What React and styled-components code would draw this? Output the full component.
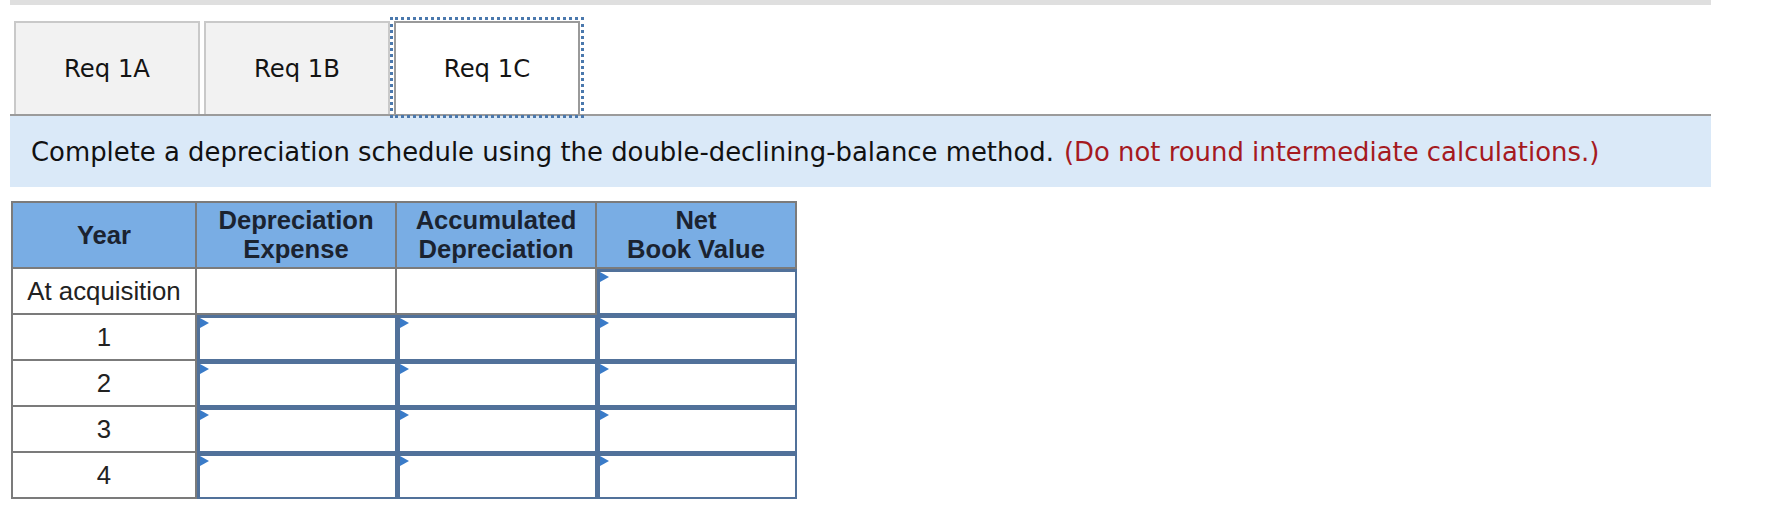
import React from "react";
import styled, { createGlobalStyle } from "styled-components";

const Global = createGlobalStyle`
  html, body { margin: 0; padding: 0; background: #ffffff; }
  body { font-family: "DejaVu Sans", Verdana, sans-serif; }
`;

const Page = styled.div`
  padding-left: 10px;
  width: 1701px;
`;

const TopBar = styled.div`
  height: 5px;
  background: #dfdfdf;
`;

const TabBar = styled.div`
  display: flex;
  gap: 4px;
  padding-left: 4px;
  margin-top: 16px;
  border-bottom: 2px solid #9b9b9b;
`;

const Tab = styled.div`
  box-sizing: border-box;
  width: 186px;
  height: 93px;
  display: flex;
  align-items: center;
  justify-content: center;
  border: 2px solid ${(p) => (p.$active ? "#9a9a9a" : "#c9c9c9")};
  border-bottom: none;
  background: ${(p) => (p.$active ? "#ffffff" : "#f2f2f2")};
  font-family: "DejaVu Sans", Verdana, sans-serif;
  font-size: 24.3px;
  color: #141414;
  outline: ${(p) => (p.$active ? "3px dotted #4a78ad" : "none")};
  outline-offset: 1px;
`;

const Instruction = styled.div`
  box-sizing: border-box;
  height: 71px;
  display: flex;
  align-items: center;
  padding-left: 21px;
  background: #dae9f8;
  font-family: "DejaVu Sans", Verdana, sans-serif;
  font-size: 25.9px;
  color: #111111;
  white-space: nowrap;
`;

const Note = styled.span`
  color: #a51a1f;
  margin-left: 10px;
`;

const Schedule = styled.div`
  display: grid;
  grid-template-columns: 184px 200px 200px 200px;
  grid-template-rows: 66px repeat(5, 46px);
  width: max-content;
  margin: 14px 0 0 1px;
  border-top: 2px solid #7b7b7b;
  border-left: 2px solid #7b7b7b;
  font-family: "Liberation Sans", Arial, sans-serif;
`;

const HeadCell = styled.div`
  box-sizing: border-box;
  display: flex;
  align-items: center;
  justify-content: center;
  text-align: center;
  background: #79ade4;
  border-right: 2px solid #7b7b7b;
  border-bottom: 2px solid #7b7b7b;
  font-weight: bold;
  font-size: 25.6px;
  line-height: 29px;
  color: #1b2330;
`;

const YearCell = styled.div`
  box-sizing: border-box;
  display: flex;
  align-items: center;
  justify-content: center;
  border-right: 2px solid #7b7b7b;
  border-bottom: 2px solid #7b7b7b;
  font-size: 25.8px;
  color: #222222;
`;

const EmptyCell = styled.div`
  box-sizing: border-box;
  border-right: 2px solid #7b7b7b;
  border-bottom: 2px solid #7b7b7b;
  background: #ffffff;
`;

const InputCell = styled.div`
  box-sizing: border-box;
  position: relative;
  background: #ffffff;
  border-left: 3px solid #51719a;
  border-top: 3px solid #51719a;
  border-right: 2px solid #51719a;
  border-bottom: 2px solid #51719a;
`;

const Flag = styled.span`
  position: absolute;
  left: 0;
  top: 0;
  width: 0;
  height: 0;
  border-top: 5px solid transparent;
  border-bottom: 5px solid transparent;
  border-left: 9px solid #3a7bc8;
`;

const Input = () => (
  <InputCell>
    <Flag />
  </InputCell>
);

const rows = ["1", "2", "3", "4"];

export default function App() {
  return (
    <>
      <Global />
      <Page>
        <TopBar />
        <TabBar>
          <Tab>Req 1A</Tab>
          <Tab>Req 1B</Tab>
          <Tab $active>Req 1C</Tab>
        </TabBar>
        <Instruction>
          Complete a depreciation schedule using the double-declining-balance method.
          <Note>(Do not round intermediate calculations.)</Note>
        </Instruction>
        <Schedule>
          <HeadCell>Year</HeadCell>
          <HeadCell>
            Depreciation
            <br />
            Expense
          </HeadCell>
          <HeadCell>
            Accumulated
            <br />
            Depreciation
          </HeadCell>
          <HeadCell>
            Net
            <br />
            Book Value
          </HeadCell>

          <YearCell>At acquisition</YearCell>
          <EmptyCell />
          <EmptyCell />
          <Input />

          {rows.map((r) => (
            <React.Fragment key={r}>
              <YearCell>{r}</YearCell>
              <Input />
              <Input />
              <Input />
            </React.Fragment>
          ))}
        </Schedule>
      </Page>
    </>
  );
}
